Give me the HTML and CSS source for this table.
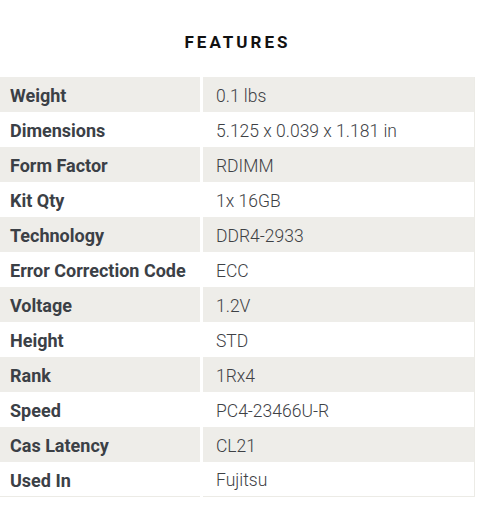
FILE: index.html
```html
<!DOCTYPE html>
<html>
<head>
<meta charset="utf-8">
<link rel="stylesheet" href="styles.css">
</head>
<body>
<div class="features">
  <h2 class="title">FEATURES</h2>
  <div class="spec-table">
    <div class="row alt"><div class="label">Weight</div><div class="value">0.1 lbs</div></div>
    <div class="row"><div class="label">Dimensions</div><div class="value">5.125 x 0.039 x 1.181 in</div></div>
    <div class="row alt"><div class="label">Form Factor</div><div class="value">RDIMM</div></div>
    <div class="row"><div class="label">Kit Qty</div><div class="value">1x 16GB</div></div>
    <div class="row alt"><div class="label">Technology</div><div class="value">DDR4-2933</div></div>
    <div class="row"><div class="label">Error Correction Code</div><div class="value">ECC</div></div>
    <div class="row alt"><div class="label">Voltage</div><div class="value">1.2V</div></div>
    <div class="row"><div class="label">Height</div><div class="value">STD</div></div>
    <div class="row alt"><div class="label">Rank</div><div class="value">1Rx4</div></div>
    <div class="row"><div class="label">Speed</div><div class="value">PC4-23466U-R</div></div>
    <div class="row alt"><div class="label">Cas Latency</div><div class="value">CL21</div></div>
    <div class="row last"><div class="label">Used In</div><div class="value">Fujitsu</div></div>
  </div>
</div>
</body>
</html>
```
FILE: styles.css
```css
html, body {
  margin: 0;
  padding: 0;
  background: #fff;
}
body {
  font-family: Roboto, "Liberation Sans", sans-serif;
}
.features {
  width: 475px;
  padding-top: 31px;
}
.title {
  margin: 0 0 24px;
  text-align: center;
  font-size: 17px;
  font-weight: 700;
  letter-spacing: 3px;
  line-height: 22px;
  color: #111;
}
.spec-table {
  display: flex;
  flex-direction: column;
}
.row {
  display: grid;
  grid-template-columns: 200px 1fr;
  column-gap: 3px;
  height: 35px;
}
.label, .value {
  display: flex;
  align-items: center;
  padding-top: 2px;
}
.label {
  padding-left: 10px;
  font-size: 18px;
  font-weight: 700;
  color: #3b4046;
}
.value {
  padding-left: 13px;
  font-size: 17.5px;
  font-weight: 300;
  color: #3e4145;
  border-right: 1px solid #ecebe6;
}
.row.alt .label, .row.alt .value {
  background: #eeede9;
}
.row.last .label, .row.last .value {
  border-bottom: 1px solid #ecebe6;
}
```
